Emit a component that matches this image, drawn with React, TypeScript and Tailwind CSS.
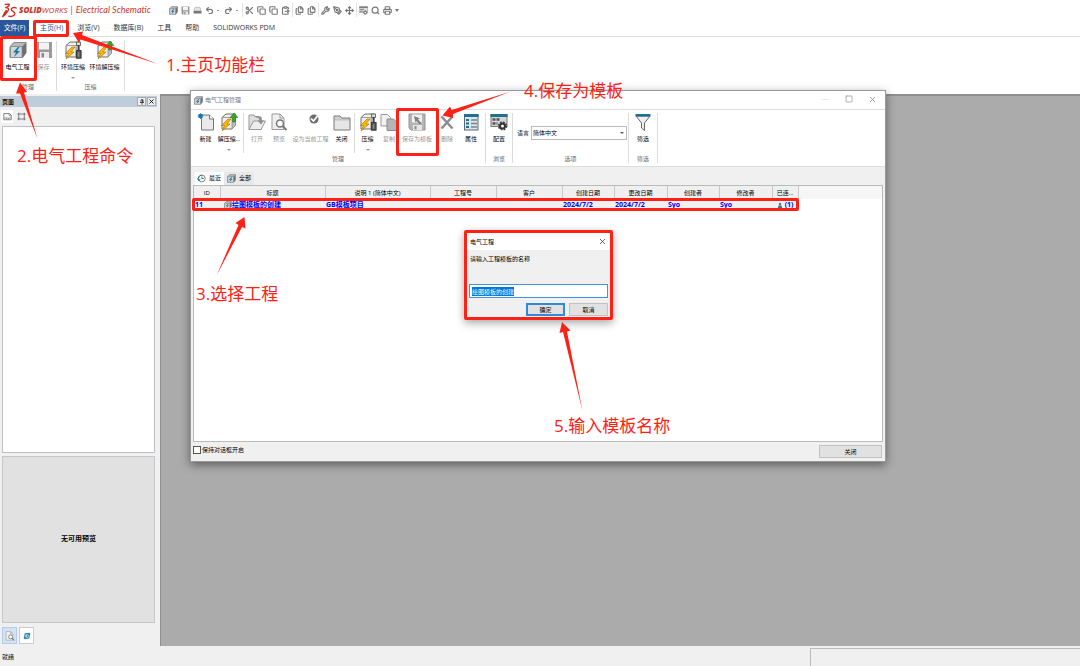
import React, { useEffect, useRef } from 'react';
import {
  ClipboardPaste, Copy, Files, Minus, Move, PenTool, Printer, Redo2, Scissors, Search, Square, Undo2, Wrench, X,
} from 'lucide-react';

interface IconProps {
  className?: string;
}

function LogoIcon() {
  return (
    <svg viewBox="0 0 42 42" className="h-[15px] w-[15px]" fill="none" stroke="#d52b1e" strokeWidth="3.8" strokeLinecap="round" strokeLinejoin="round">
      <path d="M9 4 L20 3 C22 6 17 11 11 13" />
      <path d="M11 13 C19 13 20 18 16 23 C13 28 8 34 2 38 C6 30 9 25 12 21" />
      <path d="M40 14 C34 11 26 13 26 18 C26 23 38 25 36 31 C34 37 25 39 19 37" />
    </svg>
  );
}

// Caja de proyecto con rayo azul
function ProjectIcon({ className }: IconProps) {
  return (
    <svg viewBox="0 0 36 36" className={className} strokeLinejoin="round">
      <path d="M10 3 H34 V24 L27 33 H2 V12 Z" fill="#6f6f6f" stroke="#777" strokeWidth="2" />
      <path d="M10 3 H34 L27 11 H2 Z" fill="#b9b9b9" stroke="#888" strokeWidth="1.5" />
      <path d="M3 11 H26 V33 H3 Z" fill="#cfd6da" stroke="#888" strokeWidth="1.5" />
      <path d="M18 12 L8 23 H14 L10 32 L22 20 H16 L21 12 Z" fill="#1679a8" />
    </svg>
  );
}

function FloppyIcon({ className }: IconProps) {
  return (
    <svg viewBox="0 0 36 36" className={className}>
      <path d="M2 2 H34 V34 H6 L2 30 Z" fill="#9a9a9a" />
      <rect x="8" y="3" width="20" height="14" fill="#f4f4f4" />
      <rect x="10" y="22" width="18" height="12" fill="#ededed" />
      <rect x="13" y="24" width="5" height="9" fill="#8a8a8a" />
    </svg>
  );
}

function TemplateIcon({ className }: IconProps) {
  return (
    <svg viewBox="0 0 36 36" className={className}>
      <path d="M2 2 H34 V34 H6 L2 30 Z" fill="#b4b4b4" stroke="#949494" strokeWidth="2" />
      <rect x="8" y="3" width="20" height="16" fill="#f1f1f1" />
      <rect x="10" y="24" width="18" height="10" fill="#e6e6e6" />
      <rect x="13" y="26" width="4" height="7" fill="#909090" />
      <path d="M12 6 L24 11 L20 13 L27 20 L24 23 L17 16 L15 19 Z" fill="#808080" />
    </svg>
  );
}

function BoltBox() {
  return (
    <>
      <path d="M4 9 L12 2 H31 V25 L24 32 H4 Z" fill="#efefef" stroke="#6f6f6f" strokeWidth="2" />
      <path d="M24 10 L31 3 V25 L24 32 Z" fill="#bdbdbd" />
      <path d="M4 9 H24 V32" fill="none" stroke="#8a8a8a" strokeWidth="1.5" />
      <path d="M16 12 L3 25 H9 L4 36 L20 22 H14 L22 12 Z" fill="#ffb800" stroke="#a86b00" strokeWidth="1.2" />
    </>
  );
}

function ZipIcon({ className }: IconProps) {
  return (
    <svg viewBox="0 0 36 36" className={className} strokeLinejoin="round">
      <BoltBox />
      <path d="M25 2 H33 V9 H25 Z" fill="#ddd" stroke="#444" strokeWidth="1.5" />
      <path d="M29 8 V20 M25 19 H34 V34 H25 Z" fill="#666" stroke="#3a3a3a" strokeWidth="2.5" />
      <path d="M29 23 V31" stroke="#999" strokeWidth="1.5" />
    </svg>
  );
}

function UnzipIcon({ className }: IconProps) {
  return (
    <svg viewBox="0 0 36 36" className={className} strokeLinejoin="round">
      <BoltBox />
      <path d="M28 0 L36 9 H31 V18 H25 V9 H20 Z" fill="#35a52c" stroke="#1d7a18" strokeWidth="1" />
    </svg>
  );
}

function NewIcon({ className }: IconProps) {
  return (
    <svg viewBox="0 0 36 36" className={className}>
      <path d="M9 4 H25 L33 12 V34 H9 Z" fill="#e9e9e9" stroke="#777" strokeWidth="2" />
      <path d="M25 4 V12 H33" fill="#fff" stroke="#777" strokeWidth="2" />
      <circle cx="7" cy="6" r="4.5" fill="#1679a8" />
      <path d="M7 0 V12 M1 6 H13 M3 2 L11 10 M11 2 L3 10" stroke="#1679a8" strokeWidth="1.5" />
    </svg>
  );
}

function OpenIcon({ className }: IconProps) {
  return (
    <svg viewBox="0 0 36 36" className={className} strokeLinejoin="round">
      <path d="M2 4 H12 L15 8 H26 V33 H2 Z" fill="#dedede" stroke="#999" strokeWidth="2" />
      <path d="M2 33 L11 16 H35 L26 33 Z" fill="#ededed" stroke="#999" strokeWidth="2" />
      <path d="M12 8 C18 7 23 10 23 15 H19 L26 23 L32 15 H28 C28 8 21 3 12 8 Z" fill="#8f8f8f" />
    </svg>
  );
}

function PreviewIcon({ className }: IconProps) {
  return (
    <svg viewBox="0 0 36 36" className={className}>
      <path d="M4 2 H20 L28 10 V33 H4 Z" fill="#f0f0f0" stroke="#999" strokeWidth="2" />
      <path d="M20 2 V10 H28" fill="none" stroke="#999" strokeWidth="2" />
      <circle cx="20" cy="21" r="7" fill="#fff" stroke="#777" strokeWidth="3" />
      <path d="M25 26 L33 34" stroke="#777" strokeWidth="4" />
    </svg>
  );
}

function CurrentIcon({ className }: IconProps) {
  return (
    <svg viewBox="0 0 36 36" className={className}>
      <circle cx="24" cy="12" r="9" fill="#6d6d6d" />
      <path d="M18 11 L23 16 L31 6" fill="none" stroke="#fff" strokeWidth="3.5" />
    </svg>
  );
}

function FolderIcon({ className }: IconProps) {
  return (
    <svg viewBox="0 0 36 36" className={className}>
      <path d="M2 6 H14 L17 10 H34 V34 H2 Z" fill="#d2d2d2" stroke="#777" strokeWidth="2" />
      <path d="M3 14 H33 V33 H3 Z" fill="#e6e6e6" stroke="#999" strokeWidth="1" />
    </svg>
  );
}

function CopyIcon({ className }: IconProps) {
  return (
    <svg viewBox="0 0 36 36" className={className}>
      <path d="M2 3 H15 L21 9 V26 H2 Z" fill="#f2f2f2" stroke="#999" strokeWidth="2" />
      <path d="M14 12 H27 L34 19 V35 H14 Z" fill="#b5b5b5" stroke="#8b8b8b" strokeWidth="2" />
    </svg>
  );
}

function DeleteIcon({ className }: IconProps) {
  return (
    <svg viewBox="0 0 36 36" className={className} fill="none" stroke="#8c8c8c" strokeWidth="5">
      <path d="M7 7 L29 31 M29 7 L7 31" />
    </svg>
  );
}

function PropsIcon({ className }: IconProps) {
  return (
    <svg viewBox="0 0 36 36" className={className}>
      <rect x="5" y="3" width="27" height="31" fill="#dbe6eb" stroke="#5b6a71" strokeWidth="2" />
      <rect x="4" y="2" width="29" height="6" fill="#1f6f93" />
      <path d="M8 14 H14 M8 21 H14 M8 28 H14" stroke="#1f6f93" strokeWidth="4" />
      <path d="M18 14 H30 M18 21 H30 M18 28 H30" stroke="#77858b" strokeWidth="3" />
    </svg>
  );
}

function ConfigIcon({ className }: IconProps) {
  return (
    <svg viewBox="0 0 36 36" className={className}>
      <rect x="2" y="3" width="32" height="24" fill="#d6d6d6" stroke="#777" strokeWidth="2" />
      <rect x="1" y="2" width="34" height="6" fill="#1f6f93" />
      <path d="M5 13 H20 M5 21 H15" stroke="#555" strokeWidth="5" strokeDasharray="6 2" />
      <circle cx="25" cy="26" r="5" fill="#fff" stroke="#333" strokeWidth="4" />
      <circle cx="25" cy="26" r="8" fill="none" stroke="#333" strokeWidth="2.5" strokeDasharray="3.5 2.8" />
    </svg>
  );
}

function FilterIcon({ className }: IconProps) {
  return (
    <svg viewBox="0 0 36 36" className={className}>
      <path d="M4 6 L15 20 V30 L21 35 V20 L32 6 Z" fill="#eee" stroke="#666" strokeWidth="2" />
      <rect x="3" y="2" width="30" height="5" fill="#1f6f93" />
    </svg>
  );
}

function DriveIcon({ className }: IconProps) {
  return (
    <svg viewBox="0 0 36 36" className={className}>
      <path d="M8 5 H28 L33 20 H3 Z" fill="#e2e2e2" stroke="#999" strokeWidth="2" />
      <rect x="2" y="20" width="32" height="10" fill="#777" />
    </svg>
  );
}

function PageIcon({ className }: IconProps) {
  return (
    <svg viewBox="0 0 36 36" className={className}>
      <path d="M3 6 H26 L33 13 V31 H3 Z" fill="#f7f7f7" stroke="#666" strokeWidth="3" />
      <path d="M3 24 H33 M14 24 V31 M22 24 V31 M24 6 V14 H33" fill="none" stroke="#777" strokeWidth="2.5" />
    </svg>
  );
}

function FitIcon({ className }: IconProps) {
  return (
    <svg viewBox="0 0 36 36" className={className} fill="none" stroke="#555" strokeWidth="3">
      <path d="M9 8 H27 M9 28 H27 M7 3 V33 M29 3 V33" />
      <path d="M2 8 H9 M27 8 H34 M2 28 H9 M27 28 H34" />
    </svg>
  );
}

function PinIcon({ className }: IconProps) {
  return (
    <svg viewBox="0 0 24 24" className={className} fill="none" stroke="#222" strokeWidth="3">
      <path d="M8 3 H16 V14 M8 3 V14 M4 14 H20 M12 14 V23 M14 3 V14" />
    </svg>
  );
}

function RefreshIcon({ className }: IconProps) {
  return (
    <svg viewBox="0 0 36 36" className={className}>
      <path d="M8 6 L28 3 L33 7 L28 29 L8 33 L3 28 Z" fill="#2e86ab" />
      <circle cx="18" cy="18" r="8" fill="#e6f3f8" />
      <path d="M13 18 H23 M19 13 L23 18 L19 23" fill="none" stroke="#1d6f94" strokeWidth="3" />
    </svg>
  );
}

function UserIcon({ className }: IconProps) {
  return (
    <svg viewBox="0 0 24 24" className={className}>
      <circle cx="12" cy="6" r="5" fill="#3c8296" />
      <path d="M6 12 H18 L21 23 H3 Z" fill="#49707c" />
    </svg>
  );
}

function ClockIcon({ className }: IconProps) {
  return (
    <svg viewBox="0 0 24 24" className={className} fill="none" strokeWidth="2.5">
      <circle cx="13" cy="12" r="9" stroke="#777" />
      <path d="M13 3 A9 9 0 0 0 5 17 M1 12 L5 18 L9 13" stroke="#1679a8" />
      <path d="M13 7 V12 H18" stroke="#555" />
    </svg>
  );
}

interface RibbonButtonProps {
  label: string;
  icon: React.ReactNode;
  width: string;
  disabled?: boolean;
  menu?: boolean;
}

function RibbonButton({ label, icon, width, disabled, menu }: RibbonButtonProps) {
  return (
    <button type="button" disabled={disabled} className={`flex shrink-0 flex-col items-center ${width}`}>
      {icon}
      <span className={`mt-[3px] text-[6px] leading-[10px] whitespace-nowrap ${disabled ? 'text-[#999]' : 'text-black'}`}>{label}</span>
      {menu && <span className="mt-[5px] h-0 w-0 border-x-2 border-t-2 border-x-transparent border-t-[#999]" />}
    </button>
  );
}

function RibbonGroup({ label, width, children }: { label: string; width: string; children: React.ReactNode }) {
  return (
    <div className={`flex h-[50px] shrink-0 flex-col justify-between border-r border-[#dcdcdc] ${width}`}>
      <div className="flex h-[41px] items-start">{children}</div>
      <div className="text-center text-[6px] leading-[8px] text-[#666]">{label}</div>
    </div>
  );
}

function Divider() {
  return <span className="mx-[2px] h-[40px] w-px shrink-0 bg-[#dcdcdc]" />;
}

const big = 'h-[18px] w-[18px]';
const qat = 'h-[9px] w-[9px] text-[#777]';

const quickGroups: React.ReactNode[][] = [
  [
    <ProjectIcon className={qat} />,
    <FloppyIcon className={qat} />,
    <DriveIcon className={qat} />,
    <Undo2 className={qat} strokeWidth={3} />,
    <Redo2 className={qat} strokeWidth={3} />,
  ],
  [
    <Scissors className={qat} strokeWidth={3} />,
    <Copy className={qat} strokeWidth={3} />,
    <Copy className={qat} strokeWidth={3} />,
    <ClipboardPaste className={qat} strokeWidth={3} />,
  ],
  [<Files className={qat} strokeWidth={3} />, <Files className={qat} strokeWidth={3} />],
  [<Wrench className={qat} strokeWidth={3} />, <PenTool className={qat} strokeWidth={3} />, <Move className={qat} strokeWidth={3} />],
  [
    <ConfigIcon className="h-[9px] w-[9px] opacity-80 grayscale" />,
    <Search className={qat} strokeWidth={3} />,
    <Printer className={qat} strokeWidth={3} />,
    <span className="h-0 w-0 border-x-2 border-t-[3px] border-x-transparent border-t-[#777]" />,
  ],
];

const menus = ['主页(H)', '浏览(V)', '数据库(B)', '工具', '帮助', 'SOLIDWORKS PDM'];

const columns = [
  { title: 'ID', width: 'w-[26px]' },
  { title: '标题', width: 'w-[105px]' },
  { title: '说明 1 (简体中文)', width: 'w-[105px]' },
  { title: '工程号', width: 'w-[66px]' },
  { title: '客户', width: 'w-[66px]' },
  { title: '创建日期', width: 'w-[52px]' },
  { title: '更改日期', width: 'w-[53px]' },
  { title: '创建者', width: 'w-[52px]' },
  { title: '修改者', width: 'w-[53px]' },
  { title: '已连...', width: 'w-[26px]' },
];

function Header() {
  return (
    <header className="bg-white">
      <div className="flex h-[20px] items-center pl-[2px]">
        <LogoIcon />
        <div className="ml-[2px] flex w-[147px] items-baseline leading-[14px] whitespace-nowrap text-[#c9352b] italic">
          <span className="font-['Open_Sans'] text-[8px] font-extrabold">SOLID</span>
          <span className="font-['Open_Sans'] text-[8px]">WORKS</span>
          <span className="px-[3px] font-['Lato'] text-[9px]">|</span>
          <span className="font-['Lato'] text-[9px]">Electrical Schematic</span>
        </div>
        <div className="flex items-center">
          {quickGroups.map((group, g) => (
            <div key={g} className="flex h-[14px] items-center gap-[3px] border-r border-[#e2e2e2] px-[2px] first:pl-[3px] last:border-r-0">
              {group.map((icon, i) => (
                <button key={i} type="button" className={g === 0 && i > 2 ? 'flex items-center gap-[3px] pr-[2px]' : 'flex items-center'}>
                  {icon}
                  {g === 0 && i > 2 && <span className="h-px w-[2px] bg-[#999]" />}
                </button>
              ))}
            </div>
          ))}
        </div>
      </div>

      <nav className="flex h-[17px] items-center border-b border-[#dedede] text-[7px] leading-[10px] text-[#333]">
        <button type="button" className="h-full w-[29px] bg-[#2b579a] text-white">文件(F)</button>
        <div className="flex items-center gap-[14px] pl-[11px]">
          {menus.map((m) => (
            <button key={m} type="button" className={m === '主页(H)' ? 'text-[#2b579a]' : ''}>{m}</button>
          ))}
        </div>
      </nav>

      <div className="flex h-[57px] pt-[4px]">
        <RibbonGroup label="管理" width="w-[57px]">
          <RibbonButton label="电气工程" width="w-[35px]" icon={<ProjectIcon className={big} />} />
          <RibbonButton label="保存" width="w-[17px]" disabled icon={<FloppyIcon className={big} />} />
        </RibbonGroup>
        <RibbonGroup label="压缩" width="w-[68px]">
          <RibbonButton label="环境压缩" width="w-[32px]" menu icon={<ZipIcon className={big} />} />
          <RibbonButton label="环境解压缩" width="w-[31px]" icon={<UnzipIcon className={big} />} />
        </RibbonGroup>
      </div>
    </header>
  );
}

function PagesPanel() {
  return (
    <aside className="flex w-[160px] shrink-0 flex-col pt-[2px] pr-[3px]">
      <div className="flex h-[11px] items-center justify-between bg-[#bfcddb] pr-px pl-[2px]">
        <h2 className="text-[6px] leading-[10px] font-bold text-[#111]">页面</h2>
        <div className="flex gap-px">
          <button type="button" aria-label="固定" className="flex h-[9px] w-[9px] items-center justify-center border border-[#aaa] bg-[#f0f0f0]">
            <PinIcon className="h-[6px] w-[6px]" />
          </button>
          <button type="button" aria-label="关闭" className="flex h-[9px] w-[9px] items-center justify-center border border-[#aaa] bg-[#f0f0f0]">
            <X className="h-[7px] w-[7px] text-black" strokeWidth={3} />
          </button>
        </div>
      </div>
      <div className="flex h-[19px] items-center gap-[2px] pl-px">
        <button type="button" aria-label="页" className="flex h-[13px] w-[12px] items-center justify-center bg-white"><PageIcon className="h-[9px] w-[9px]" /></button>
        <button type="button" aria-label="适合" className="flex h-[13px] w-[12px] items-center justify-center"><FitIcon className="h-[9px] w-[9px]" /></button>
      </div>
      <div className="mx-[2px] flex-[328] border border-[#bcbfc4] bg-white" />
      <div className="mx-[2px] mt-[3px] flex flex-[166] items-center justify-center border border-[#c6c6c6] bg-[#e1e1e1] text-[7px] font-bold text-black">
        无可用预览
      </div>
      <div className="flex gap-[2px] px-[2px] pt-[4px] pb-[2px]">
        <button type="button" aria-label="预览" className="flex h-[17px] w-[15px] items-center justify-center border border-[#b4cbea] bg-[#d3e1f4]"><PreviewIcon className="h-[10px] w-[10px]" /></button>
        <button type="button" aria-label="刷新" className="flex h-[17px] w-[15px] items-center justify-center border border-[#ccc] bg-white"><RefreshIcon className="h-[8px] w-[8px]" /></button>
      </div>
    </aside>
  );
}

function ProjectManager() {
  return (
    <section className="absolute top-[90px] left-[190px] flex h-[372px] w-[696px] flex-col border border-[#999] bg-[#f0f0f0] shadow-[0_3px_9px_rgba(0,0,0,0.45)]">
      <div className="flex h-[19px] shrink-0 items-center justify-between border-b border-[#ddd] bg-white pr-[8px] pl-[3px]">
        <h2 className="flex items-center gap-[2px] text-[6px] leading-[10px] text-[#777]">
          <ProjectIcon className="h-[9px] w-[9px]" />
          电气工程管理
        </h2>
        <div className="flex items-center gap-[15px] pb-[2px] text-[#888]">
          <button type="button" aria-label="最小化"><Minus className="h-[9px] w-[9px] text-[#ddd]" strokeWidth={2} /></button>
          <button type="button" aria-label="最大化"><Square className="h-[8px] w-[8px]" strokeWidth={2} /></button>
          <button type="button" aria-label="关闭"><X className="h-[9px] w-[9px]" strokeWidth={2} /></button>
        </div>
      </div>

      <div className="flex h-[57px] shrink-0 border-b border-[#ddd] bg-white pt-[3px]">
        <RibbonGroup label="管理" width="w-[295px]">
          <span className="w-[3px]" />
          <RibbonButton label="新建" width="w-[23px]" icon={<NewIcon className={big} />} />
          <RibbonButton label="解压缩..." width="w-[24px]" menu icon={<UnzipIcon className={big} />} />
          <Divider />
          <RibbonButton label="打开" width="w-[22px]" disabled icon={<OpenIcon className={big} />} />
          <RibbonButton label="预览" width="w-[22px]" disabled icon={<PreviewIcon className={big} />} />
          <RibbonButton label="设为当前工程" width="w-[41px]" disabled icon={<CurrentIcon className={big} />} />
          <RibbonButton label="关闭" width="w-[21px]" icon={<FolderIcon className={big} />} />
          <Divider />
          <RibbonButton label="压缩" width="w-[21px]" menu icon={<ZipIcon className={big} />} />
          <RibbonButton label="复制" width="w-[22px]" disabled icon={<CopyIcon className={big} />} />
          <RibbonButton label="保存为模板" width="w-[34px]" disabled icon={<TemplateIcon className={big} />} />
          <RibbonButton label="删除" width="w-[26px]" disabled icon={<DeleteIcon className={big} />} />
          <RibbonButton label="属性" width="w-[22px]" icon={<PropsIcon className={big} />} />
        </RibbonGroup>
        <RibbonGroup label="浏览" width="w-[27px]">
          <RibbonButton label="配置" width="w-[26px]" icon={<ConfigIcon className={big} />} />
        </RibbonGroup>
        <RibbonGroup label="选项" width="w-[116px]">
          <label htmlFor="lang" className="mt-[14px] pl-[4px] text-[6px] leading-[12px] text-[#333]">语言</label>
          <div className="relative mt-[13px] ml-[2px]">
            <select id="lang" defaultValue="zh" className="block h-[14px] w-[96px] appearance-none border border-[#bbb] bg-white pl-px text-[6px] leading-[12px] text-black">
              <option value="zh">简体中文</option>
            </select>
            <span className="pointer-events-none absolute top-[6px] right-[3px] h-0 w-0 border-x-2 border-t-2 border-x-transparent border-t-[#555]" />
          </div>
        </RibbonGroup>
        <RibbonGroup label="筛选" width="w-[29px]">
          <RibbonButton label="筛选" width="w-[28px]" icon={<FilterIcon className={big} />} />
        </RibbonGroup>
      </div>

      <div className="flex h-[18px] shrink-0 items-end pl-[4px] text-[6px] leading-[13px] text-black">
        <button type="button" className="flex items-center gap-[3px] bg-white pr-[3px] pl-[2px]"><ClockIcon className="h-[9px] w-[9px]" />最近</button>
        <button type="button" className="flex items-center gap-[3px] bg-[#e8e8e8] pr-[3px] pl-[3px]"><ProjectIcon className="h-[9px] w-[9px]" />全部</button>
      </div>

      <div className="mx-[2px] flex-1 border border-[#bbb] bg-white">
        <table className="w-full table-fixed border-collapse text-[6px] leading-[10px]">
          <thead>
            <tr className="h-[13px] bg-[#f0f0f0] text-black">
              {columns.map((c) => (
                <th key={c.title} className={`border-r border-[#c8c8c8] p-0 font-normal whitespace-nowrap ${c.width}`}>{c.title}</th>
              ))}
              <th className="bg-[#f6f6f6] p-0" />
            </tr>
          </thead>
          <tbody>
            <tr className="h-[12px] text-[7px] font-bold text-[#0000ff]">
              <td className="bg-[#f0f0f0] p-0 pl-px">11</td>
              <td className="bg-[#f0f0f0] p-0">
                <span className="flex items-center pl-[4px] whitespace-nowrap"><ProjectIcon className="h-[8px] w-[8px]" />绘图模板的创建</span>
              </td>
              <td className="bg-[#f0f0f0] p-0 pl-px whitespace-nowrap">GB模板项目</td>
              <td className="bg-[#f0f0f0] p-0" />
              <td className="bg-[#f0f0f0] p-0" />
              <td className="bg-[#f0f0f0] p-0 pl-px">2024/7/2</td>
              <td className="bg-[#f0f0f0] p-0 pl-px">2024/7/2</td>
              <td className="bg-[#f0f0f0] p-0 pl-px">Syo</td>
              <td className="bg-[#f0f0f0] p-0 pl-px">Syo</td>
              <td className="bg-[#f0f0f0] p-0">
                <span className="flex items-center justify-center gap-[2px]"><UserIcon className="h-[7px] w-[6px]" />(1)</span>
              </td>
              <td className="p-0" />
            </tr>
          </tbody>
        </table>
      </div>

      <div className="flex h-[19px] shrink-0 items-center justify-between pr-[3px] pl-[2px] text-[6px] leading-[10px] text-black">
        <label className="flex items-center gap-px pb-[3px]">
          <input type="checkbox" className="h-[8px] w-[8px] appearance-none border border-[#555] bg-white" />
          保持对话框开启
        </label>
        <button type="button" className="h-[13px] w-[63px] border border-[#c2c2c2] bg-[#e1e1e1]">关闭</button>
      </div>
    </section>
  );
}

function NameDialog() {
  const inputRef = useRef<HTMLInputElement>(null);

  // El nombre aparece seleccionado al abrir
  useEffect(() => {
    inputRef.current?.focus();
    inputRef.current?.select();
  }, []);

  return (
    <section className="absolute top-[230px] left-[464px] flex h-[90px] w-[149px] flex-col rounded-[2px] border-[3px] border-[#ff2116] bg-[#f0f0f0] text-[6px] leading-[10px] text-black shadow-[0_3px_8px_rgba(0,0,0,0.35)]">
      <div className="flex h-[17px] items-center justify-between bg-white px-[3px]">
        <h2>电气工程</h2>
        <button type="button" aria-label="关闭"><X className="h-[9px] w-[9px] text-[#333]" strokeWidth={2} /></button>
      </div>
      <div className="flex flex-1 flex-col px-[2px] pt-[4px]">
        <label htmlFor="template-name" className="pl-px">请输入工程模板的名称</label>
        <input
          ref={inputRef}
          id="template-name"
          defaultValue="绘图模板的创建"
          className="mt-[20px] h-[14px] w-full border border-[#3f96dc] bg-white px-[2px] outline-none selection:bg-[#0078d7] selection:text-white"
        />
        <div className="mt-[5px] flex justify-end gap-[4px]">
          <button type="button" className="h-[13px] w-[39px] border-2 border-[#2e8bdb] bg-[#e1e1e1]">确定</button>
          <button type="button" className="h-[13px] w-[39px] border border-[#c2c2c2] bg-[#e1e1e1]">取消</button>
        </div>
      </div>
    </section>
  );
}

function Annotations() {
  return (
    <div className="pointer-events-none absolute top-0 left-0 text-[17px] leading-[24px] whitespace-nowrap text-[#ff2116]">
      <div className="absolute top-[20px] left-[33px] h-[17px] w-[36px] rounded-[2px] border-[3px] border-[#ff2116]" />
      <div className="absolute top-[36px] left-0 h-[45px] w-[37px] rounded-[2px] border-[3px] border-[#ff2116]" />
      <div className="absolute top-[108px] left-[396px] h-[48px] w-[43px] rounded-[2px] border-[3px] border-[#ff2116]" />
      <div className="absolute top-[198px] left-[192px] h-[13px] w-[607px] rounded-[2px] border-[3px] border-[#ff2116]" />
      <svg viewBox="0 0 700 430" className="absolute top-0 left-0 h-[430px] w-[700px]" fill="#ff2116">
        <path d="M73 33 L83 31.5 L82 35 L158 64 L80.5 39.5 L79 43 Z" />
        <path d="M20 82.5 L27 92 L24 92.5 L37.5 139 L20 93.5 L16 93.5 Z" />
        <path d="M244.5 217 L245.5 228.5 L242 227 L216.5 275.5 L238.5 225 L235.5 223 Z" />
        <path d="M442.5 115.5 L450 106.5 L451.5 110 L512 91 L453 114 L453 118 Z" />
        <path d="M562 322 L570.5 330.5 L567 331.5 L582.5 411 L563 332 L559.5 333 Z" />
      </svg>
      <p className="absolute top-[53px] left-[166px]">1.主页功能栏</p>
      <p className="absolute top-[144px] left-[17px]">2.电气工程命令</p>
      <p className="absolute top-[282px] left-[196px]">3.选择工程</p>
      <p className="absolute top-[79px] left-[524px]">4.保存为模板</p>
      <p className="absolute top-[414px] left-[554px]">5.输入模板名称</p>
    </div>
  );
}

export default function App() {
  return (
    <div className="relative flex min-h-screen flex-col overflow-hidden bg-[#f0f0f0] font-['Open_Sans','Noto_Sans_CJK_SC',sans-serif]">
      <Header />
      <main className="flex flex-1">
        <PagesPanel />
        <div className="flex-1 border-t-2 border-l border-[#8f8f8f] bg-[#ababab]" />
      </main>
      <footer className="flex h-[20px] items-end justify-between text-[6px] leading-[18px] text-black">
        <span className="pl-[2px]">就绪</span>
        <span className="h-[18px] w-1/4 border-t border-l border-[#bbb]" />
      </footer>
      <ProjectManager />
      <NameDialog />
      <Annotations />
    </div>
  );
}
